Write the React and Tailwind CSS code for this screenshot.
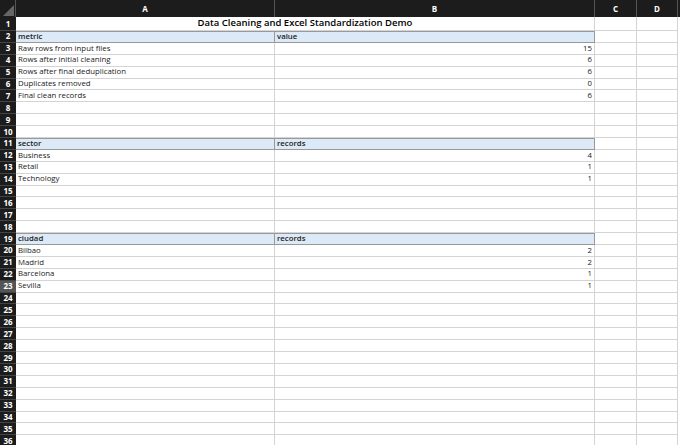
import React from "react";

const rows = {
  1: { title: true },
  2: { a: "metric", b: "value", hdr: true },
  3: { a: "Raw rows from input files", b: "15" },
  4: { a: "Rows after initial cleaning", b: "6" },
  5: { a: "Rows after final deduplication", b: "6" },
  6: { a: "Duplicates removed", b: "0" },
  7: { a: "Final clean records", b: "6" },
  11: { a: "sector", b: "records", hdr: true },
  12: { a: "Business", b: "4" },
  13: { a: "Retail", b: "1" },
  14: { a: "Technology", b: "1" },
  19: { a: "ciudad", b: "records", hdr: true },
  20: { a: "Bilbao", b: "2" },
  21: { a: "Madrid", b: "2" },
  22: { a: "Barcelona", b: "1" },
  23: { a: "Sevilla", b: "1" },
};

export default function App() {
  const nums = Array.from({ length: 36 }, (_, i) => i + 1);
  return (
    <div className="w-[680px] h-[445px] overflow-hidden bg-[#e8e8e8] text-[7.8px] text-[#222]" style={{ fontFamily: "'Open Sans', 'Liberation Sans', sans-serif" }}>
      <div className="flex h-[17px] bg-[#1c1c1c] text-white font-bold text-[8px]">
        <div className="w-[16px] border-r border-[#555] relative overflow-hidden">
          <div className="absolute right-[1px] bottom-[1px] w-0 h-0 border-l-[11px] border-l-transparent border-b-[11px] border-b-[#666]" />
        </div>
        <div className="w-[259px] border-r border-[#555] flex items-center justify-center">A</div>
        <div className="w-[320px] border-r border-[#555] flex items-center justify-center">B</div>
        <div className="w-[42px] border-r border-[#555] flex items-center justify-center">C</div>
        <div className="w-[41px] border-r border-[#555] flex items-center justify-center">D</div>
      </div>
      {nums.map((n) => {
        const r = rows[n] || {};
        const h = n === 1 ? "h-[14px]" : "h-[11.9px]";
        return (
          <div key={n} className={`flex ${h} bg-white`}>
            <div className={`w-[16px] shrink-0 flex items-center justify-center font-bold text-white text-[8px] border-b border-[#444] ${n === 23 ? "bg-[#555]" : "bg-[#1c1c1c]"}`}>{n}</div>
            {r.title ? (
              <div className="w-[579px] border-r border-b border-[#d4d4d4] flex items-center justify-center font-semibold text-[9.5px] text-black">Data Cleaning and Excel Standardization Demo</div>
            ) : (
              <>
                <div className={`w-[259px] px-[2px] flex items-center border-r border-b ${r.hdr ? "bg-[#dce9f6] border-[#999] border-t font-semibold" : "border-[#d4d4d4]"}`}>{r.a}</div>
                <div className={`w-[320px] px-[2px] flex items-center border-r border-b ${r.hdr ? "bg-[#dce9f6] border-[#999] border-t font-semibold" : "border-[#d4d4d4] justify-end"}`}>{r.b}</div>
              </>
            )}
            <div className="w-[42px] border-r border-b border-[#d4d4d4]" />
            <div className="w-[41px] border-r border-b border-[#d4d4d4]" />
          </div>
        );
      })}
    </div>
  );
}
